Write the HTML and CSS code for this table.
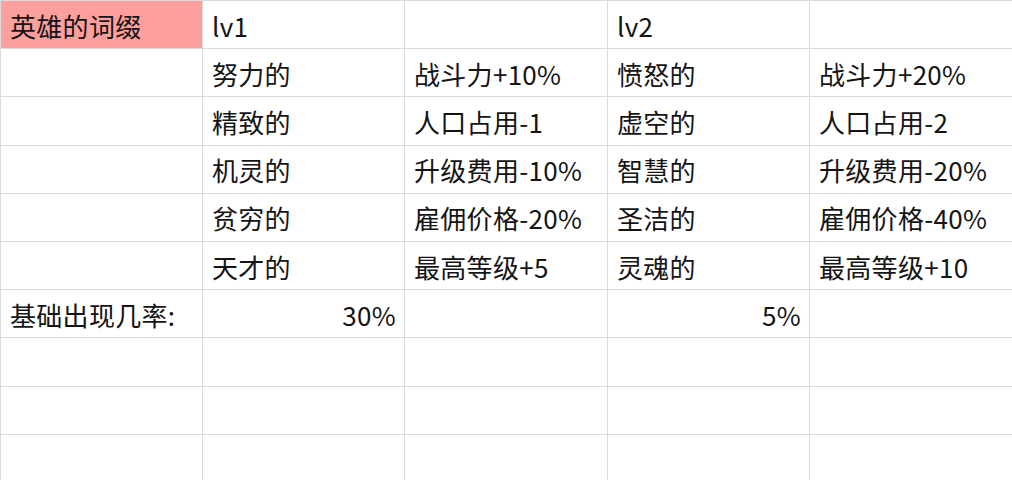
FILE: index.html
```html
<!DOCTYPE html>
<html lang="zh-CN">
<head>
<meta charset="utf-8">
<title>英雄的词缀</title>
<link rel="stylesheet" href="styles.css">
</head>
<body>
<div class="sheet">
  <div class="cell head">英雄的词缀</div>
  <div class="cell">lv1</div>
  <div class="cell"></div>
  <div class="cell">lv2</div>
  <div class="cell"></div>

  <div class="cell"></div>
  <div class="cell">努力的</div>
  <div class="cell">战斗力+10%</div>
  <div class="cell">愤怒的</div>
  <div class="cell">战斗力+20%</div>

  <div class="cell"></div>
  <div class="cell">精致的</div>
  <div class="cell">人口占用-1</div>
  <div class="cell">虚空的</div>
  <div class="cell">人口占用-2</div>

  <div class="cell"></div>
  <div class="cell">机灵的</div>
  <div class="cell">升级费用-10%</div>
  <div class="cell">智慧的</div>
  <div class="cell">升级费用-20%</div>

  <div class="cell"></div>
  <div class="cell">贫穷的</div>
  <div class="cell">雇佣价格-20%</div>
  <div class="cell">圣洁的</div>
  <div class="cell">雇佣价格-40%</div>

  <div class="cell"></div>
  <div class="cell">天才的</div>
  <div class="cell">最高等级+5</div>
  <div class="cell">灵魂的</div>
  <div class="cell">最高等级+10</div>

  <div class="cell">基础出现几率:</div>
  <div class="cell num">30%</div>
  <div class="cell"></div>
  <div class="cell num">5%</div>
  <div class="cell"></div>

  <div class="cell"></div><div class="cell"></div><div class="cell"></div><div class="cell"></div><div class="cell"></div>
  <div class="cell"></div><div class="cell"></div><div class="cell"></div><div class="cell"></div><div class="cell"></div>
  <div class="cell"></div><div class="cell"></div><div class="cell"></div><div class="cell"></div><div class="cell"></div>
</div>
</body>
</html>
```

FILE: styles.css
```css
html, body {
  margin: 0;
  padding: 0;
  background: #ffffff;
  overflow: hidden;
}

.sheet {
  display: grid;
  grid-template-columns: 201px 201px 202px 201px 1fr;
  grid-auto-rows: 47.2px;
  gap: 1px;
  padding: 1px 0 0 1px;
  background: #dadada;
  width: 1011px;
  font-family: "Noto Sans CJK SC", "Noto Sans", sans-serif;
  font-size: 26px;
  color: #141414;
}

.cell {
  background: #ffffff;
  display: flex;
  align-items: center;
  padding: 2px 8px 0 9px;
  white-space: nowrap;
  letter-spacing: 0.3px;
  line-height: 1;
}

.head {
  background: #fd9f9c;
}

.num {
  justify-content: flex-end;
}
```
